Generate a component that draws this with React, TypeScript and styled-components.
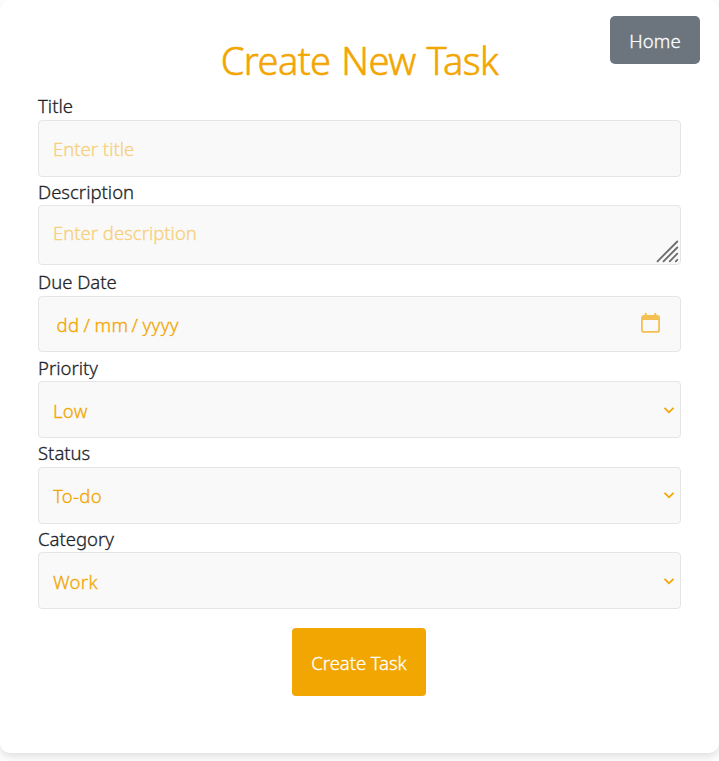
import React from "react";
import styled, { createGlobalStyle } from "styled-components";

const GlobalStyle = createGlobalStyle`
  * { box-sizing: border-box; }
  html { background: #fff; }
  body { margin: 0; }
  body, input, textarea, select, button {
    font-family: "Noto Sans", "Open Sans", sans-serif;
    font-size: 18.5px;
    font-weight: 300;
    line-height: 28px;
    -webkit-text-stroke: 0.3px currentColor;
  }
`;

const Page = styled.div`
  min-height: 761px;
  overflow: hidden;
`;

const Card = styled.main`
  position: relative;
  height: 753px;
  padding: 37px 38px 0;
  border-radius: 10px;
  background: #fff;
  box-shadow: 0 4px 10px rgba(0, 0, 0, 0.13);
  color: #212529;
`;

const HomeButton = styled.button`
  position: absolute;
  top: 16px;
  right: 19px;
  width: 90px;
  height: 48px;
  padding: 2px 0 0;
  border: 0;
  border-radius: 5px;
  background: #6c757d;
  color: #fff;
  letter-spacing: 0.1px;
`;

const Heading = styled.h1`
  margin: 0;
  height: 55px;
  line-height: 46px;
  font-size: 38px;
  font-weight: 300;
  letter-spacing: -0.55px;
  word-spacing: 1.5px;
  text-align: center;
  color: #f2a602;
  -webkit-text-stroke-width: 0.6px;
`;

const Form = styled.form`
  display: flex;
  flex-direction: column;
`;

const Field = styled.div<{ $height: number }>`
  display: flex;
  flex-direction: column;
  height: ${(p) => p.$height}px;
`;

const Label = styled.label<{ $drop?: number }>`
  flex: none;
  height: 28px;
  padding-top: ${(p) => p.$drop ?? 0}px;
`;

const Box = styled.div<{ $height: number }>`
  position: relative;
  flex: none;
  display: flex;
  align-items: center;
  height: ${(p) => p.$height}px;
  border: 1px solid #e3e5e7;
  border-radius: 4px;
  background: #f9f9f9;
  color: #f2a602;
`;

const control = `
  width: 100%;
  height: 100%;
  padding: 0 14px;
  border: 0;
  outline: 0;
  background: transparent;
  color: inherit;
  &::placeholder { color: #f7d07c; opacity: 1; }
`;

const TextInput = styled.input`
  ${control}
`;

const TextArea = styled.textarea`
  ${control}
  padding-top: 13px;
  resize: none;
  overflow: hidden;
`;

const Select = styled.select<{ $drop: number }>`
  ${control}
  padding-top: ${(p) => 1 + 2 * p.$drop}px;
  appearance: none;
  letter-spacing: 0.3px;
`;

const Grip = styled.svg`
  position: absolute;
  right: 1px;
  bottom: 1px;
`;

const Chevron = styled.svg<{ $drop: number }>`
  position: absolute;
  right: 5px;
  top: ${(p) => 22 + p.$drop}px;
  pointer-events: none;
`;

const DateParts = styled.div`
  display: flex;
  flex: 1;
  gap: 4px;
  padding: 1px 0 0 17.5px;
`;

const DatePart = styled.span<{ $width: number }>`
  width: ${(p) => p.$width}px;
  white-space: nowrap;
  letter-spacing: 0.4px;
`;

const CalendarIcon = styled.svg`
  margin: 0 20px 3px 0;
`;

const SubmitButton = styled.button`
  align-self: center;
  width: 134px;
  height: 68px;
  margin: 5px 1px 0 0;
  padding: 1px 0 0;
  border: 0;
  border-radius: 4px;
  background: #f2a602;
  color: #fff;
  letter-spacing: -0.05px;
`;

type SelectFieldProps = {
  id: string;
  label: string;
  options: string[];
  height: number;
  labelDrop: number;
  valueDrop: number;
};

function SelectField({ id, label, options, height, labelDrop, valueDrop }: SelectFieldProps) {
  return (
    <Field $height={height}>
      <Label htmlFor={id} $drop={labelDrop}>
        {label}
      </Label>
      <Box $height={57}>
        <Select id={id} $drop={valueDrop}>
          {options.map((o) => (
            <option key={o}>{o}</option>
          ))}
        </Select>
        <Chevron $drop={valueDrop} width="12" height="10" viewBox="0 0 12 10" fill="none">
          <path d="M1.500 2.800 6 7.300l4.500-4.500" stroke="#f2a602" strokeWidth="1.8" />
        </Chevron>
      </Box>
    </Field>
  );
}

export default function App() {
  return (
    <Page>
      <GlobalStyle />
      <Card>
        <HomeButton type="button">Home</HomeButton>
        <Heading>Create New Task</Heading>
        <Form onSubmit={(e) => e.preventDefault()}>
          <Field $height={85}>
            <Label htmlFor="title">Title</Label>
            <Box $height={57}>
              <TextInput id="title" placeholder="Enter title" />
            </Box>
          </Field>
          <Field $height={91}>
            <Label htmlFor="description" $drop={1}>
              Description
            </Label>
            <Box $height={60}>
              <TextArea id="description" placeholder="Enter description" />
              <Grip width="24" height="24" viewBox="0 0 24 24" fill="none">
                <path
                  d="M2.500 22.300 22.300 2.500M8.500 22.300 22.300 8.500M14.700 22.300l7.600-7.600M20.800 22.300l1.500-1.500"
                  stroke="#6b6b6b"
                  strokeWidth="1.8"
                  strokeLinecap="round"
                />
              </Grip>
            </Box>
          </Field>
          <Field $height={85}>
            <Label>Due Date</Label>
            <Box $height={56}>
              <DateParts>
                <DatePart $width={23}>dd</DatePart>
                <DatePart $width={7}>/</DatePart>
                <DatePart $width={33}>mm</DatePart>
                <DatePart $width={7}>/</DatePart>
                <DatePart $width={38}>yyyy</DatePart>
              </DateParts>
              <CalendarIcon width="19" height="20" viewBox="0 0 19 20" fill="none">
                <rect x="0.9" y="3" width="17.2" height="15.900" rx="2" stroke="#f5c052" strokeWidth="1.8" />
                <path d="M1 7V5a2 2 0 0 1 2-2h13a2 2 0 0 1 2 2v2z" fill="#f5c052" />
                <path d="M4.700 0v4M14.300 0v4" stroke="#f5c052" strokeWidth="2" />
              </CalendarIcon>
            </Box>
          </Field>
          <SelectField id="priority" label="Priority" options={["Low", "Medium", "High"]} height={86} labelDrop={1} valueDrop={1} />
          <SelectField id="status" label="Status" options={["To-do", "In progress", "Done"]} height={85} labelDrop={0} valueDrop={0} />
          <SelectField id="category" label="Category" options={["Work", "Personal"]} height={99} labelDrop={1} valueDrop={1} />
          <SubmitButton type="submit">Create Task</SubmitButton>
        </Form>
      </Card>
    </Page>
  );
}
